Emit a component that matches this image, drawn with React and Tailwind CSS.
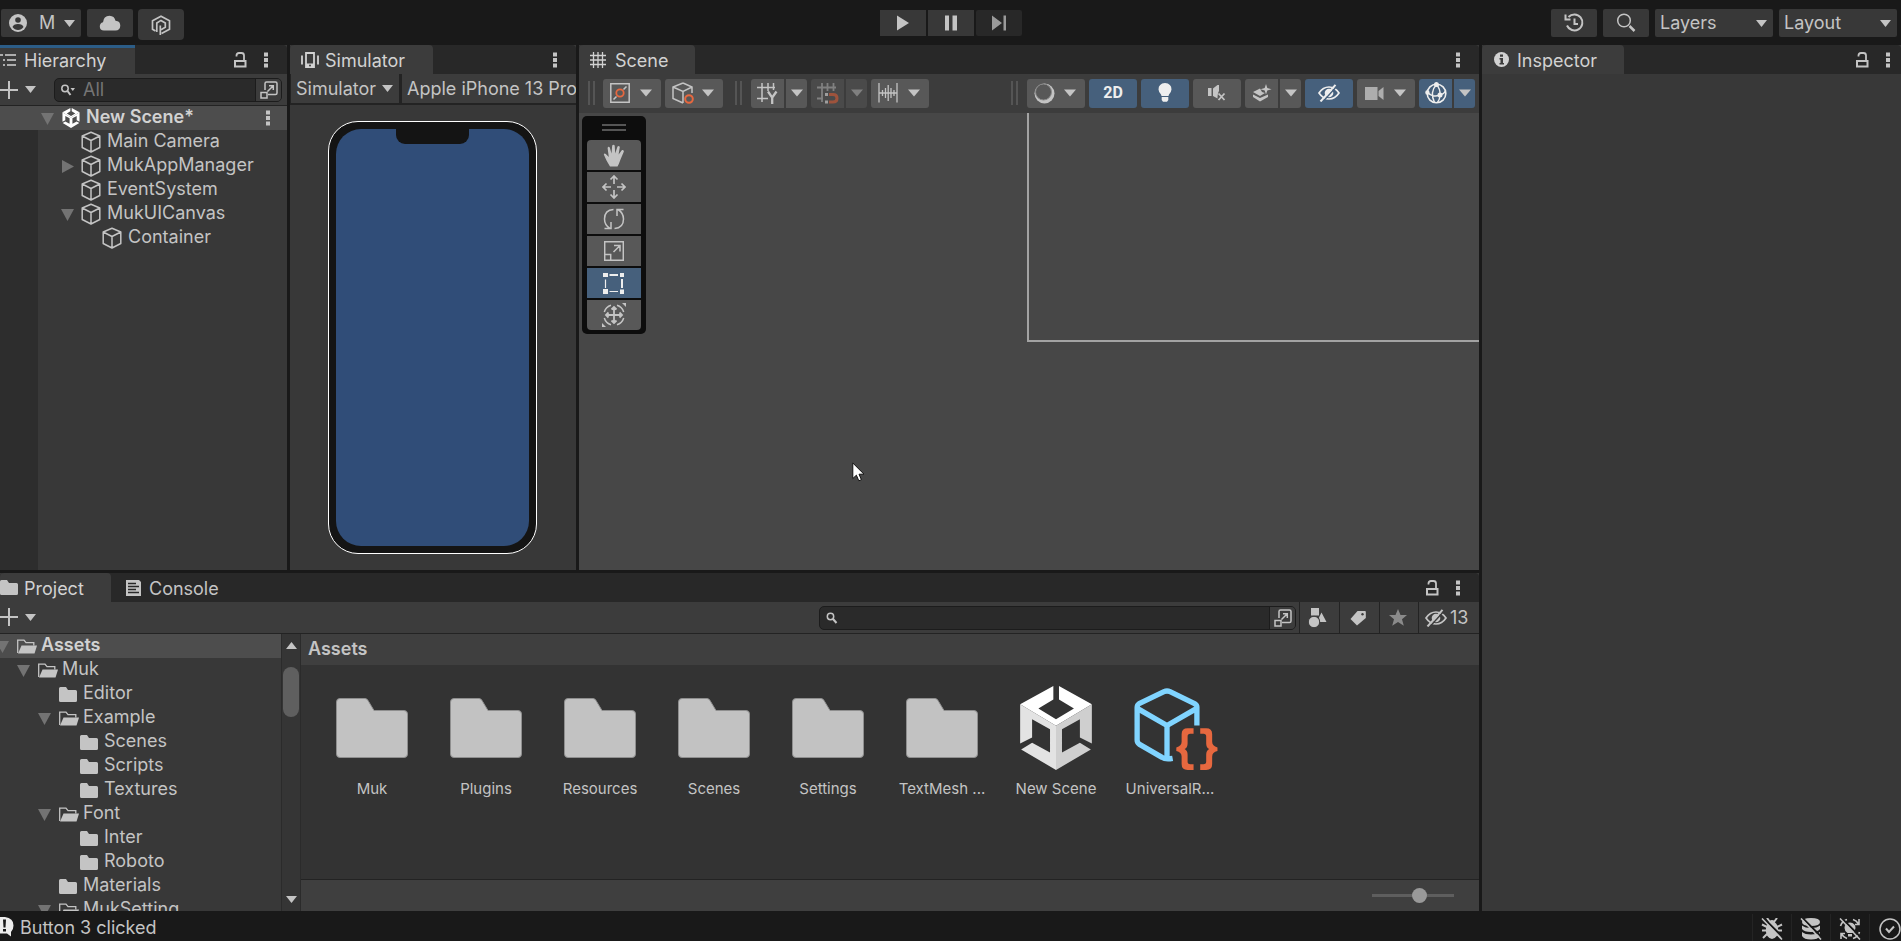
import React from "react";

const assets = [
  { name: "Muk", icon: "folder" },
  { name: "Plugins", icon: "folder" },
  { name: "Resources", icon: "folder" },
  { name: "Scenes", icon: "folder" },
  { name: "Settings", icon: "folder" },
  { name: "TextMesh ...", icon: "folder" },
  { name: "New Scene", icon: "scene" },
  { name: "UniversalR...", icon: "pipeline" },
];

const hierarchy = [
  { name: "Main Camera", depth: 1 },
  { name: "MukAppManager", depth: 1, arrow: "right" },
  { name: "EventSystem", depth: 1 },
  { name: "MukUICanvas", depth: 1, arrow: "down" },
  { name: "Container", depth: 2 },
];

const folders = [
  { name: "Assets", depth: 0, open: true },
  { name: "Muk", depth: 1, open: true },
  { name: "Editor", depth: 2 },
  { name: "Example", depth: 2, open: true },
  { name: "Scenes", depth: 3 },
  { name: "Scripts", depth: 3 },
  { name: "Textures", depth: 3 },
  { name: "Font", depth: 2, open: true },
  { name: "Inter", depth: 3 },
  { name: "Roboto", depth: 3 },
  { name: "Materials", depth: 2 },
  { name: "MukSetting", depth: 2, open: true },
];

const folderIndent = ["pl-0", "pl-[21px]", "pl-[42px]", "pl-[63px]"];
const objectIndent = ["pl-[41px]", "pl-[61px]", "pl-[82px]"];

/* ---------- icons ---------- */

function Icon({ w = 20, h = 20, box, className = "", children }) {
  return (
    <svg
      width={w}
      height={h}
      viewBox={box || `0 0 ${w} ${h}`}
      className={`block shrink-0 ${className}`}
      fill="none"
      stroke="currentColor"
      strokeWidth="1.5"
      aria-hidden="true"
    >
      {children}
    </svg>
  );
}

const Caret = ({ className = "" }) => (
  <Icon w={12} h={8} className={className}>
    <path d="M0 .5h12L6 7.5z" fill="currentColor" stroke="none" />
  </Icon>
);

const SmallCaret = ({ className = "" }) => (
  <Icon w={11} h={7} className={className}>
    <path d="M0 0h11L5.500 7z" fill="currentColor" stroke="none" />
  </Icon>
);

function Arrow({ dir }) {
  return (
    <Icon w={13} h={13} className="text-[#737373]">
      {dir === "down" && <path d="M0 1h13L6.500 13z" fill="currentColor" stroke="none" />}
      {dir === "right" && <path d="M1 0v13l12-6.500z" fill="currentColor" stroke="none" />}
    </Icon>
  );
}

const Dots = () => (
  <Icon w={6} h={16}>
    <path d="M1 .5h4v4H1zM1 6h4v4H1zM1 11.500h4v4H1z" fill="currentColor" stroke="none" />
  </Icon>
);

const Lock = () => (
  <Icon w={14} h={16}>
    <path d="M2 9h10.500v5.500H2z" strokeWidth="2" />
    <path d="M3.500 4.500V3.500Q3.500 1 6 1h2.500Q11 1 11 3.500V8" strokeWidth="1.800" />
  </Icon>
);

const Plus = () => (
  <Icon w={18} h={18}>
    <path d="M9 0v18M0 9h18" strokeWidth="2" />
  </Icon>
);

const Cube = () => (
  <Icon w={20} h={22}>
    <path d="M10 1.200 18.800 5v11.500L10 21l-8.800-4.500V5zM1.200 5 10 9.500 18.800 5M10 9.500V21" strokeWidth="1.500" strokeLinejoin="round" />
  </Icon>
);

function UnityMark({ w, h, shaded = true }) {
  return (
    <Icon w={w} h={h} box="180 77 216 253">
      <g stroke="none">
        <path fill="#fff" d="M280 77v41l-45 27 53 32 54-32-45-27V77l99 55-108 65-108-65z" />
        <path fill={shaded ? "#e3e3e3" : "#fff"} d="M180 132l108 65v133l-105-62 33-20 54 29v-70l-54-30v55l-36 18z" />
        <path fill={shaded ? "#cfcfcf" : "#fff"} d="M396 132l-108 65v133l105-62-33-20-54 29v-70l54-30v55l36 18z" />
      </g>
    </Icon>
  );
}

const PipelineIcon = () => (
  <Icon w={96} h={84} box="486 77 288 253">
    <path
      d="M711 196V140Q711 134 704 130L630 94Q621 90 612 94L537 130Q531 134 531 142V240Q531 248 537 252L606 292Q616 299 638 295M534 146l87 50 87-50M621 196v97"
      stroke="#80d4ff"
      strokeWidth="16"
      strokeLinejoin="round"
    />
    <g fill="#e7683f" stroke="none">
      <path d="M701 204h-18q-18 0-18 18v23q0 13-16 17v11q16 3 16 17v22q0 18 18 18h18v-17h-10q-8 0-8-8v-21q0-12-9-17 9-5 9-17v-21q0-8 8-8h10z" />
      <path d="M721 204h18q18 0 18 18v23q0 13 16 17v11q-16 3-16 17v22q0 18-18 18h-18v-17h10q8 0 8-8v-21q0-12 9-17-9-5-9-17v-21q0-8-8-8h-10z" />
    </g>
  </Icon>
);

const BigFolder = () => (
  <Icon w={72} h={60}>
    <path
      d="M4 .5h25Q31 .5 32 2.500L38 12.500H68Q71.500 12.500 71.500 16V56Q71.500 59.500 68 59.500H4Q.5 59.500 .5 56V4Q.5 .5 4 .5z"
      fill="#c2c2c2"
      stroke="#8f8f8f"
      strokeWidth="1"
    />
  </Icon>
);

const FolderIcon = () => (
  <Icon w={18} h={15}>
    <path d="M0 1.500Q0 0 1.500 0H7l2 3h7.500Q18 3 18 4.500V13.500Q18 15 16.500 15h-15Q0 15 0 13.500z" fill="#c4c4c4" stroke="none" />
  </Icon>
);

const OpenFolderIcon = () => (
  <Icon w={20} h={15}>
    <path d="M.7 14V1.200H7l2 2.500h7.800V6.500" stroke="#c4c4c4" strokeWidth="1.300" />
    <path d="M4.500 6.500H20L17.500 14.500H1z" fill="#c4c4c4" stroke="none" />
  </Icon>
);

const Expand = () => (
  <Icon w={18} h={18}>
    <path d="M5 9V2.500Q5 1 6.500 1H15.500Q17 1 17 2.500V12Q17 13.500 15.500 13.500H8M1 11.500h6V17H1zM7.500 10.500 13 5M9 4.700h4.300V9" />
  </Icon>
);

const EyeOff = ({ cut = "#3c3c3c" }) => (
  <Icon w={22} h={18}>
    <path d="M1 9q4-6 10-6t10 6q-4 6-10 6T1 9z" strokeWidth="1.700" />
    <circle cx="11" cy="9" r="4.300" fill="currentColor" stroke="none" />
    <path d="M4.500 18 19.500 1.500" stroke={cut} strokeWidth="1.500" />
    <path d="M2.500 17.500 17.500 .8" strokeWidth="2" />
  </Icon>
);

/* ---------- shared parts ---------- */

function IconButton({ label, className = "", children }) {
  return (
    <button type="button" aria-label={label} className={`flex shrink-0 items-center justify-center ${className}`}>
      {children}
    </button>
  );
}

function Tab({ icon, label, active = true, focus = false, className = "" }) {
  const look = active ? "bg-[#3c3c3c] text-[#d2d2d2]" : "text-[#c4c4c4]";
  const top = focus ? "border-t-[3px] border-[#2c5d87] pb-[3px]" : "rounded-t-[4px]";
  return (
    <button type="button" role="tab" aria-selected={active} className={`flex h-full shrink-0 items-center ${look} ${top} ${className}`}>
      {icon}
      <span className="pt-[2px]">{label}</span>
    </button>
  );
}

function TabBar({ children, lock = true, className = "pr-2" }) {
  return (
    <div className={`flex h-[29px] shrink-0 items-center rounded-t-[4px] bg-[#282828] ${className}`}>
      <div role="tablist" className="flex h-full flex-1">{children}</div>
      {lock && <IconButton label="Lock panel" className="w-[26px]"><Lock /></IconButton>}
      <IconButton label="Panel menu" className="w-[26px]"><Dots /></IconButton>
    </div>
  );
}

function Picker({ label, value, className = "", pad = "pl-[5px]" }) {
  return (
    <div className={`grid shrink-0 items-center ${className}`}>
      <select aria-label={label} className={`col-start-1 row-start-1 h-full w-full appearance-none bg-transparent ${pad}`}>
        <option>{value}</option>
      </select>
      <SmallCaret className="pointer-events-none col-start-1 row-start-1 mr-[6px] justify-self-end" />
    </div>
  );
}

const Grip = ({ className = "" }) => (
  <div className={`h-6 w-[7px] border-x-2 border-[#555555] ${className}`} />
);

function Tool({ label, on, dim, caret, narrow, children }) {
  const bg = on ? "bg-[#46607c] text-[#eeeeee]" : "bg-[#585858] text-[#c4c4c4]";
  const width = caret ? "w-[58px] pl-[7px] pr-[9px]" : narrow ? "w-[33px] rounded-r-none" : "w-[48px]";
  return (
    <IconButton label={label} className={`h-[29px] rounded-[3px] ${bg} ${width} ${dim ? "opacity-50" : ""}`}>
      {children}
      {caret && <Caret className="ml-auto" />}
    </IconButton>
  );
}

function SplitTool({ label, on, dim, children }) {
  return (
    <div className="flex gap-[2px]">
      <Tool label={label} on={on} dim={dim} narrow>{children}</Tool>
      <IconButton
        label={`${label} options`}
        className={`h-[29px] w-[21px] rounded-r-[3px] text-[#c4c4c4] ${on ? "bg-[#46607c]" : "bg-[#585858]"} ${dim ? "opacity-50" : ""}`}
      >
        <Caret />
      </IconButton>
    </div>
  );
}

/* ---------- top bar ---------- */

function TopBar() {
  const button = "h-7 w-[46px] rounded-[2px] bg-[#383838]";
  return (
    <header className="grid h-[45px] shrink-0 grid-cols-[1fr_auto_1fr] items-start pt-[9px] pl-px pr-1">
      <div className="flex items-start">
        <button type="button" aria-label="Account: M" className="flex h-7 w-20 items-center rounded-[2px] bg-[#383838] pl-2">
          <Icon w={18} h={18}>
            <circle cx="9" cy="9" r="9" fill="currentColor" stroke="none" />
            <circle cx="9" cy="6" r="2.800" fill="#383838" stroke="none" />
            <path d="M3.500 13q1-3 5.500-3t5.500 3Q12.500 16 9 16t-5.500-3z" fill="#383838" stroke="none" />
          </Icon>
          <span className="ml-3 mr-auto">M</span>
          <SmallCaret className="mr-[6px]" />
        </button>
        <IconButton label="Cloud" className={`ml-[6px] ${button}`}>
          <Icon w={22} h={16}>
            <path d="M5 15.500Q.8 15.500 .8 11.500 .8 8 4 7.300 4.500 1 10.500 .8 15.500 1 16.500 5.800 21.300 6 21.300 10.800 21 15.500 16.500 15.500z" fill="currentColor" stroke="none" />
          </Icon>
        </IconButton>
        <IconButton label="Version control" className="ml-[5px] h-[31px] w-[46px] rounded-[4px] bg-[#383838]">
          <Icon w={20} h={20}>
            <path d="M4.500 16 1.500 14.200V5.800L10 1.200l8.500 4.600v8.400L10.500 18.500" strokeWidth="1.700" />
            <path d="M5.800 17V8L10 5.400 14.300 8v4.300L10 14.700" strokeWidth="1.700" />
            <path d="M9.300 20v-9.500" strokeWidth="1.700" />
          </Icon>
        </IconButton>
      </div>

      <div className="flex gap-[2px] pt-px pl-[3px]">
        <IconButton label="Play" className="h-[26px] w-[46px] bg-[#383838]">
          <Icon w={12} h={16}><path d="M0 .5 12 8 0 15.500z" fill="currentColor" stroke="none" /></Icon>
        </IconButton>
        <IconButton label="Pause" className="h-[26px] w-[46px] bg-[#383838]">
          <Icon w={12} h={16}><path d="M0 .5h4v15H0zM7.500 .5h4.500v15H7.500z" fill="currentColor" stroke="none" /></Icon>
        </IconButton>
        <IconButton label="Step" className="h-[26px] w-[46px] rounded-[2px] bg-[#282828] text-[#9a9a9a]">
          <Icon w={16} h={16}><path d="M1 .5 11 8 1 15.500zM12.500 .5H15v15h-2.500z" fill="currentColor" stroke="none" /></Icon>
        </IconButton>
      </div>

      <div className="flex justify-end gap-[6px]">
        <IconButton label="Undo history" className={button}>
          <Icon w={20} h={20}>
            <path d="M4.500 4A8 8 0 1 1 3 12.500M1.500 1.500V6.500h5M10.500 5.500V11H14" strokeWidth="2" />
          </Icon>
        </IconButton>
        <IconButton label="Search" className={button}>
          <Icon w={20} h={20}>
            <circle cx="8" cy="7.500" r="6.300" strokeWidth="1.500" />
            <path d="M13.500 13 18.500 18" strokeWidth="2.500" />
          </Icon>
        </IconButton>
        <Picker label="Layers" value="Layers" className="h-7 w-[118px] rounded-[2px] bg-[#383838]" />
        <Picker label="Layout" value="Layout" className="h-7 w-[118px] rounded-[2px] bg-[#383838]" />
      </div>
    </header>
  );
}

/* ---------- hierarchy ---------- */

function Hierarchy() {
  return (
    <section aria-label="Hierarchy" className="flex w-[287px] shrink-0 flex-col bg-[#383838]">
      <TabBar>
        <Tab
          focus
          label="Hierarchy"
          className="w-[135px] gap-2"
          icon={
            <Icon w={16} h={14}>
              <path d="M0 2h3M5 2h11M3 7h2M7 7h9M3 12h2M7 12h9" strokeWidth="1.500" />
            </Icon>
          }
        />
      </TabBar>
      <div className="flex h-8 shrink-0 items-center border-b border-[#232323] bg-[#3c3c3c] pr-[5px]">
        <button type="button" aria-label="Create" className="flex items-center gap-[7px]">
          <Plus />
          <SmallCaret />
        </button>
        <div className="ml-[18px] flex h-6 flex-1 items-center overflow-hidden rounded-[5px] border border-[#1c1c1c] bg-[#2a2a2a]">
          <Icon w={14} h={12} className="ml-[6px]">
            <circle cx="4" cy="4.500" r="3.200" />
            <path d="M6.500 7 9.500 11" strokeWidth="2" />
            <path d="M9.500 4h4.500l-2.200 3z" fill="currentColor" stroke="none" />
          </Icon>
          <input type="text" aria-label="Search hierarchy" placeholder="All" className="ml-2 w-0 flex-1 bg-transparent outline-none placeholder:text-[#757575]" />
          <IconButton label="Open search window" className="h-full w-[26px] border-l border-[#1c1c1c] bg-[#3c3c3c]"><Expand /></IconButton>
        </div>
      </div>
      <div className="flex h-6 shrink-0 items-center bg-[#4d4d4d] pr-4 pl-[41px]">
        <Arrow dir="down" />
        <span className="ml-2"><UnityMark w={18} h={20} shaded={false} /></span>
        <span className="mr-auto ml-[6px] pb-[2px] font-semibold text-[#d2d2d2]">New Scene*</span>
        <IconButton label="Scene menu"><Dots /></IconButton>
      </div>
      <div className="flex flex-1">
        <div className="w-[38px] bg-[#2d2d2d]" />
        <ul className="-ml-[38px] flex-1">
          {hierarchy.map((o) => (
            <li key={o.name}>
              <button type="button" className={`flex h-6 w-full items-center ${objectIndent[o.depth]}`}>
                <Arrow dir={o.arrow} />
                <span className="ml-[7px]"><Cube /></span>
                <span className="ml-[6px] pb-[2px]">{o.name}</span>
              </button>
            </li>
          ))}
        </ul>
      </div>
    </section>
  );
}

/* ---------- simulator ---------- */

function Simulator() {
  return (
    <section aria-label="Simulator" className="flex w-[286px] shrink-0 flex-col overflow-hidden bg-[#383838]">
      <TabBar lock={false}>
        <Tab
          label="Simulator"
          className="w-[143px] gap-[6px] pl-[11px]"
          icon={
            <Icon w={18} h={16}>
              <path d="M5 1h8v14H5z" strokeWidth="1.800" />
              <path d="M5 11.500h8V15H5z" fill="currentColor" stroke="none" />
              <path d="M1 3.500v9M17 3.500v9" strokeWidth="1.800" />
              <circle cx="9" cy="13.500" r="1" fill="#3c3c3c" stroke="none" />
            </Icon>
          }
        />
      </TabBar>
      <div className="flex h-[31px] shrink-0 overflow-hidden border-b-2 border-[#232323] bg-[#3c3c3c]">
        <Picker label="View" value="Simulator" className="w-[112px] border-r-[3px] border-l border-[#232323]" />
        <Picker label="Device" value="Apple iPhone 13 Pro Max" className="w-[250px]" />
      </div>
      <div className="flex flex-1 justify-center pt-4 pr-[2px]">
        <div className="flex h-[433px] w-[209px] rounded-[30px] border border-white bg-[#141414] p-[7px]">
          <div className="flex flex-1 justify-center overflow-hidden rounded-[25px] bg-[#304d78]">
            <div className="h-[15px] w-[73px] rounded-b-[9px] bg-[#141414]" />
          </div>
        </div>
      </div>
    </section>
  );
}

/* ---------- scene ---------- */

const tools = [
  {
    name: "View tool",
    icon: (
      <Icon w={22} h={23}>
        <path
          d="M7 22.500 3.500 16.500 .8 10.500Q1.200 9 2.800 10L5.800 13 4.600 4Q5.200 2 6.800 3.500L8.500 9.500 9.200 1.500Q10.500 0 11.700 1.500L12.200 9.500 14.500 2.500Q16 1.300 16.800 3L15.600 10.500 19 6Q21 5.500 20.900 7.500L17.500 15.500 15.800 20 14.500 22.500z"
          fill="currentColor"
          stroke="none"
        />
      </Icon>
    ),
  },
  {
    name: "Move tool",
    icon: (
      <Icon w={24} h={24}>
        <path d="M12 9V2M8.500 4.500 12 1l3.500 3.500M12 15v7M8.500 19.500 12 23l3.500-3.500M9 12H2M4.500 8.500 1 12l3.500 3.500M15 12h7M19.500 8.500 23 12l-3.500 3.500" strokeWidth="1.700" />
      </Icon>
    ),
  },
  {
    name: "Rotate tool",
    icon: (
      <Icon w={22} h={22}>
        <path d="M10.500 1.500Q1.500 2 1.500 11q0 6 5.500 9.500M1.500 20.500H8V14M11.500 20.500q9-.5 9-9.500 0-6-5.500-9.500M20.500 1.500H14V8" />
      </Icon>
    ),
  },
  {
    name: "Scale tool",
    icon: (
      <Icon w={20} h={20}>
        <path d="M.7 .7h18.600v18.600H.7zM.7 13.500h6v6M9.500 11 15.500 5M10 4.500h6v6" />
      </Icon>
    ),
  },
  {
    name: "Rect tool",
    on: true,
    icon: (
      <Icon w={22} h={21}>
        <path d="M0 0h5v4H0zM17 0h4v4H17zM0 16h5v5H0zM17 16.500h4V21h-4z" fill="currentColor" stroke="none" />
        <path d="M6.500 2h8.500M19 6v9" strokeWidth="2" />
        <path d="M6.500 18.500h8.500M2.500 6.500V15" strokeWidth="1.200" />
      </Icon>
    ),
  },
  {
    name: "Transform tool",
    icon: (
      <Icon w={24} h={24}>
        <path d="M12 4v16M4 12h16M9.500 6.500 12 4 14.500 6.500M9.500 17.500 12 20 14.500 17.500M6.500 9.500 4 12 6.500 14.500M17.500 9.500 20 12 17.500 14.500" strokeWidth="1.800" />
        <path d="M9 2.300A10 10 0 0 0 2.300 9M15 2.300A10 10 0 0 1 21.700 9M9 21.700A10 10 0 0 1 2.300 15M15 21.700A10 10 0 0 0 21.700 15" />
        <path d="M20 0h4v4zM0 20v4h4z" fill="currentColor" stroke="none" />
      </Icon>
    ),
  },
];

function SceneToolbar() {
  return (
    <div className="flex h-[39px] shrink-0 items-center bg-[#3c3c3c] pr-1 pb-px pl-[9px]">
      <Grip className="mr-2" />
      <div className="flex gap-1">
        <Tool label="Tool handle position" caret>
          <Icon w={20} h={20}>
            <path d="M.8 .8h18.400v18.400H.8z" />
            <path d="M3.500 16.500l3-3M13.500 6.500l3-3" />
            <circle cx="10" cy="10" r="3.700" stroke="#e7683f" strokeWidth="1.800" />
          </Icon>
        </Tool>
        <Tool label="Tool handle rotation" caret>
          <Icon w={22} h={22}>
            <path d="M11 1 20 5v6M11 21 1 16.500V5l10-4M1 5l10 4.500L20 5M11 9.500V21" />
            <circle cx="17" cy="17" r="3.800" stroke="#e7683f" strokeWidth="2" />
          </Icon>
        </Tool>
      </div>
      <Grip className="mr-[9px] ml-3" />
      <div className="flex gap-1">
        <SplitTool label="Grid visibility">
          <Icon w={21} h={21}>
            <path d="M5 0v19M0 4.500h18M0 15.500h11M11 0v8M16.500 0v7" />
            <path d="M11 8.500 15.200 14.500V21M19.500 8.500 15.200 14.500" strokeWidth="2.300" />
          </Icon>
        </SplitTool>
        <SplitTool label="Grid snapping" dim>
          <Icon w={22} h={21}>
            <path d="M5 0v19M0 4.500h19M0 15.500h6M10.500 0v8M16.500 0v8" strokeWidth="1.800" />
            <path d="M12 11.500H16q4 0 4 3.800 0 3.700-4 3.700h-4" stroke="#ff6a3d" strokeWidth="3" />
            <path d="M8 10h3v3H8zM8 17.500h3v3H8z" fill="#ffffff" stroke="none" />
          </Icon>
        </SplitTool>
        <Tool label="Snap increment" caret>
          <Icon w={20} h={20}>
            <path d="M1 0v19.500M19 0v19.500M1 10h18M4.500 7v6M7.500 5v10M10.200 2v16M13 5v10M16 7v6" strokeWidth="1.300" />
          </Icon>
        </Tool>
      </div>

      <Grip className="mr-[9px] ml-auto" />
      <div className="flex gap-1">
        <Tool label="Draw mode" caret>
          <Icon w={21} h={21}>
            <circle cx="10.500" cy="10.500" r="10" fill="#c4c4c4" stroke="none" />
            <circle cx="9.500" cy="9" r="8" fill="#585858" strokeWidth="1" stroke="#8a8a8a" />
          </Icon>
        </Tool>
        <Tool label="2D view" on>
          <span className="font-[Roboto,sans-serif] text-base font-bold">2D</span>
        </Tool>
        <Tool label="Scene lighting" on>
          <Icon w={14} h={20}>
            <path d="M7 0Q13.500 .5 13.500 6.500 13.300 9 11 11.500L10.500 13h-7L3 11.500Q.7 9 .5 6.500 .5 .5 7 0zM3.700 14h6.600v3L9 18.800H5L3.700 17z" fill="currentColor" stroke="none" />
          </Icon>
        </Tool>
        <Tool label="Scene audio">
          <Icon w={18} h={18}>
            <path d="M0 4h3.500v8H0zM5 4.500 9.500 1H11v6Q9.500 9 9.500 14.500L5 12z" fill="currentColor" stroke="none" />
            <path d="M10.500 9.500 16.500 16M16.500 9.500 10.500 16" strokeWidth="1.800" />
          </Icon>
        </Tool>
        <SplitTool label="Effects">
          <Icon w={20} h={18}>
            <path d="M1 8 8 4.500l2 3.500 3 1-5 3zM1 10.500l7 3.500 8-3.500v2.500L8 17.500 1 13zM14 0l1.300 4L19.500 5.200 15.300 6.500 14 10.500 12.700 6.500 8.500 5.200 12.700 4z" fill="currentColor" stroke="none" />
          </Icon>
        </SplitTool>
        <Tool label="Hidden objects" on><EyeOff cut="#46607c" /></Tool>
        <Tool label="Camera settings" caret>
          <Icon w={20} h={13}>
            <path d="M1 0h12.500v13H1zM14.500 4 19.500 0v13l-5-4z" fill="#adadad" stroke="none" />
          </Icon>
        </Tool>
        <SplitTool label="Gizmos" on>
          <Icon w={22} h={22}>
            <circle cx="11.500" cy="11.500" r="9.300" strokeWidth="1.600" />
            <path d="M11.500 2.500Q4.500 10 9.500 20.500M2.500 10.500Q8.500 16 14.500 13M11.500 2.500Q15.500 7 15 13M15 13Q15 17 12.500 20.500M15 13q4-1 5.500-4" strokeWidth="1.400" />
            <path d="M14 2.500a2.500 2.500 0 1 1-5 0 2.500 2.500 0 0 1 5 0zM4.600 10.500a2.200 2.200 0 1 1-4.400 0 2.200 2.200 0 0 1 4.400 0zM17.500 13a2.500 2.500 0 1 1-5 0 2.500 2.500 0 0 1 5 0z" fill="currentColor" stroke="none" />
          </Icon>
        </SplitTool>
      </div>
    </div>
  );
}

function Scene() {
  return (
    <section aria-label="Scene" className="flex min-w-0 flex-1 flex-col bg-[#383838]">
      <TabBar lock={false}>
        <Tab
          label="Scene"
          className="w-[116px] gap-[9px] pl-[11px]"
          icon={
            <Icon w={16} h={16}>
              <path d="M3.500 0v16M8 0v16M12.500 0v16M0 3.500h16M0 8h16M0 12.500h16" strokeWidth="1.300" />
            </Icon>
          }
        />
      </TabBar>
      <SceneToolbar />
      <div className="relative flex-1 overflow-hidden bg-[#474747]">
        <div className="absolute top-0 right-0 left-[448px] h-[229px] border-b-2 border-l-2 border-[#a3a3a3]" />
        <div className="absolute top-[3px] left-[3px] flex w-16 flex-col rounded-[5px] bg-[#0d0d0d] px-[5px] pb-1">
          <div className="mx-auto mt-2 mb-[9px] h-[7px] w-6 border-y-2 border-[#555555]" />
          <div role="toolbar" aria-label="Tools" className="flex flex-col gap-[2px] overflow-hidden rounded-[4px]">
            {tools.map((t) => (
              <IconButton
                key={t.name}
                label={t.name}
                className={`h-[30px] ${t.on ? "bg-[#46607c] text-[#eeeeee]" : "bg-[#585858] text-[#c4c4c4]"}`}
              >
                {t.icon}
              </IconButton>
            ))}
          </div>
        </div>
        <svg width="13" height="20" viewBox="0 0 13 20" className="absolute top-[349px] left-[273px]" aria-hidden="true">
          <path d="M.8 1v15.500l3.600-3.300 2.400 5.600 2.600-1.100L7 12.200h5z" fill="#fff" stroke="#111" strokeWidth="1" />
        </svg>
      </div>
    </section>
  );
}

/* ---------- project ---------- */

function Project() {
  const filter = "h-full border-l border-[#232323]";
  return (
    <section aria-label="Project" className="flex h-[338px] shrink-0 flex-col bg-[#383838]">
      <TabBar>
        <Tab label="Project" className="w-[111px] gap-[6px]" icon={<FolderIcon />} />
        <Tab
          label="Console"
          active={false}
          className="gap-2 pl-[15px]"
          icon={
            <Icon w={15} h={16}>
              <path d="M0 0h13l2 2v14H0z" fill="currentColor" stroke="none" />
              <path d="M2 3.500h8M2 6.500h11M2 9.500h8M2 12.500h11" stroke="#282828" strokeWidth="1.300" />
            </Icon>
          }
        />
      </TabBar>
      <div className="flex h-8 shrink-0 items-center border-b border-[#232323] bg-[#3c3c3c]">
        <button type="button" aria-label="Create asset" className="mr-auto flex items-center gap-[7px] pb-px">
          <Plus />
          <SmallCaret />
        </button>
        <div className="mr-[3px] flex h-6 w-[477px] items-center overflow-hidden rounded-[5px] border border-[#1c1c1c] bg-[#2a2a2a]">
          <Icon w={12} h={12} className="ml-[6px]">
            <circle cx="4.500" cy="4.500" r="3.200" />
            <path d="M7 7 10.500 11" strokeWidth="2" />
          </Icon>
          <input type="text" aria-label="Search project" className="ml-2 w-0 flex-1 bg-transparent outline-none" />
          <IconButton label="Open search window" className="h-full w-[26px] border-l border-[#1c1c1c] bg-[#3c3c3c]"><Expand /></IconButton>
        </div>
        <IconButton label="Search by type" className={`w-10 pr-1 ${filter}`}>
          <Icon w={19} h={20}>
            <path d="M3 0h8v7.500H3zM13.500 4.500l5 9.500h-6.500l-1-4.500z" fill="currentColor" stroke="none" />
            <circle cx="6" cy="14" r="5.700" fill="currentColor" stroke="#3c3c3c" strokeWidth="1" />
          </Icon>
        </IconButton>
        <IconButton label="Search by label" className={`w-10 pr-1 ${filter}`}>
          <Icon w={16} h={16}>
            <path d="M7.500 1H15q.8 0 .8 1v6L7 15.500 .5 9z" fill="currentColor" stroke="none" />
            <circle cx="12.500" cy="4.200" r="1.200" fill="#3c3c3c" stroke="none" />
          </Icon>
        </IconButton>
        <IconButton label="Favorites" className={`w-[39px] pr-[2px] text-[#8a8a8a] ${filter}`}>
          <Icon w={18} h={17}>
            <path d="M9 0l2.500 6H18l-5 4.200 1.800 6.500L9 13l-5.800 3.700L5 10.200 0 6h6.500z" fill="currentColor" stroke="none" />
          </Icon>
        </IconButton>
        <button type="button" aria-label="Hidden packages: 13" className={`flex w-[61px] items-center gap-[3px] pl-[6px] ${filter}`}>
          <EyeOff />
          <span>13</span>
        </button>
      </div>

      <div className="flex min-h-0 flex-1">
        <ul className="w-[281px] shrink-0 overflow-hidden">
          {folders.map((f, i) => (
            <li key={i} className={i === 0 ? "bg-[#4d4d4d] font-semibold text-[#d2d2d2]" : ""}>
              <button type="button" className={`-ml-1 flex h-6 items-center ${folderIndent[f.depth]}`}>
                <Arrow dir={f.open ? "down" : undefined} />
                <span className="ml-2 w-5">{f.open ? <OpenFolderIcon /> : <FolderIcon />}</span>
                <span className="ml-1 pb-[2px]">{f.name}</span>
              </button>
            </li>
          ))}
        </ul>
        <div className="flex w-5 shrink-0 flex-col items-center border-x border-[#2b2b2b] bg-[#353535] py-2">
          <SmallCaret className="rotate-180" />
          <div className="mt-[18px] mb-auto h-[50px] w-4 rounded-full bg-[#5f5f5f]" />
          <SmallCaret />
        </div>
        <div className="flex min-w-0 flex-1 flex-col bg-[#333333]">
          <h2 className="flex h-[31px] shrink-0 items-center bg-[#3f3f3f] pb-[2px] pl-[7px] font-semibold">Assets</h2>
          <div className="flex flex-1 flex-wrap content-start pt-[21px] pl-[14px]">
            {assets.map((a) => (
              <button type="button" key={a.name} className="flex w-[114px] flex-col items-center gap-2">
                <span className="flex h-[84px] items-center">
                  {a.icon === "folder" && <BigFolder />}
                  {a.icon === "scene" && <UnityMark w={72} h={84} />}
                  {a.icon === "pipeline" && <PipelineIcon />}
                </span>
                <span className="text-[15px] leading-[22px]">{a.name}</span>
              </button>
            ))}
          </div>
          <div className="flex h-8 shrink-0 items-center justify-end border-t border-[#232323] bg-[#3f3f3f] pr-[25px]">
            <input
              type="range"
              aria-label="Icon size"
              min="0"
              max="100"
              defaultValue="59"
              className="h-4 w-[82px] appearance-none bg-transparent [&::-webkit-slider-runnable-track]:h-[3px] [&::-webkit-slider-runnable-track]:bg-[#5e5e5e] [&::-webkit-slider-thumb]:-mt-[6px] [&::-webkit-slider-thumb]:size-[15px] [&::-webkit-slider-thumb]:appearance-none [&::-webkit-slider-thumb]:rounded-full [&::-webkit-slider-thumb]:bg-[#999999]"
            />
          </div>
        </div>
      </div>
    </section>
  );
}

/* ---------- inspector and status ---------- */

function Inspector() {
  return (
    <section aria-label="Inspector" className="flex w-[419px] shrink-0 flex-col bg-[#383838]">
      <TabBar className="">
        <Tab
          label="Inspector"
          className="w-[142px] gap-2 pl-3"
          icon={
            <Icon w={15} h={15}>
              <circle cx="7.500" cy="7.500" r="7.500" fill="currentColor" stroke="none" />
              <path d="M6 2.500h3v2.200H6zM5.500 6h3.500v5h1v1.500H5.500V11h1V7.500h-1z" fill="#3c3c3c" stroke="none" />
            </Icon>
          }
        />
      </TabBar>
    </section>
  );
}

function StatusBar() {
  const cell = "h-[27px] w-[39px] border-l border-[#242424] pt-[3px]";
  const slash = (
    <>
      <path d="M2.500 0 22.500 20" stroke="#191919" strokeWidth="2" />
      <path d="M1 .5 21 21.500" strokeWidth="1.600" />
    </>
  );
  return (
    <footer className="flex h-[30px] shrink-0 items-end overflow-hidden">
      <button type="button" className="mr-auto flex h-full items-center gap-[6px]">
        <Icon w={14} h={21}>
          <path d="M0 1h5q8.500 1 8.500 8.500 0 4-2.500 6.500v4.500l-4-3H0z" fill="#eeeeee" stroke="none" />
          <path d="M3 3.500h3l-.5 8h-2zM3 13h3v2.500H3z" fill="#191919" stroke="none" />
        </Icon>
        <span className="pt-1">Button 3 clicked</span>
      </button>
      <IconButton label="Debugger" className={cell}>
        <Icon w={22} h={22}>
          <path d="M8 4.500Q8 2 11 2t3 2.500q3 2 3.200 7.500 0 8-6.200 9-6-1-6.200-9Q5 6.500 8 4.500z" fill="currentColor" stroke="none" />
          <path d="M6 0l3 4M16 0l-3 4M1 6.500l5 2.500M21 6.500 16 9M1 12.500h20M2 20l4-4M20 20l-4-4" strokeWidth="2" />
          {slash}
        </Icon>
      </IconButton>
      <IconButton label="Cache server" className={cell}>
        <Icon w={22} h={22}>
          <path d="M2 4q0-4 9-4t9 4-9 4-9-4zM2 7.500q3 2.500 9 2.500t9-2.500V11q-2 3-9 3t-9-3zM2 14q3 2.500 9 2.500t9-2.500v4q-2 3.500-9 3.500T2 18z" fill="currentColor" stroke="none" />
          {slash}
        </Icon>
      </IconButton>
      <IconButton label="Auto lighting" className={cell}>
        <Icon w={22} h={22}>
          <path d="M11 4.500q5.500 .5 5.500 5.500 0 3-3 5h-5q-3-2-3-5 0-5 5.500-5.500zM9 16h4v2.500H9z" fill="currentColor" stroke="none" />
          <path d="M8 1.500A10 10 0 0 0 1.500 8M14 1.500a10 10 0 0 1 5.500 4.500M8 20.500A10 10 0 0 1 2.500 16M14 20.500A10 10 0 0 0 20.500 14M20 1v5.500h-4M2 21v-5.500h4" strokeWidth="1.600" />
          {slash}
        </Icon>
      </IconButton>
      <IconButton label="Background tasks" className="h-[27px] w-8 border-l border-[#242424] pt-[3px] pl-2">
        <Icon w={22} h={22}>
          <circle cx="11" cy="11" r="10" strokeWidth="1.500" />
          <path d="M7 10.500 10 14l5-5.500" strokeWidth="2" />
        </Icon>
      </IconButton>
    </footer>
  );
}

export default function App() {
  return (
    <div className="flex h-screen flex-col overflow-hidden bg-[#191919] font-[Inter,sans-serif] text-[18px] leading-6 whitespace-nowrap text-[#c4c4c4] [font-optical-sizing:none]">
      <TopBar />
      <main className="flex min-h-0 flex-1 gap-[3px]">
        <div className="flex min-w-0 flex-1 flex-col gap-[3px]">
          <div className="flex min-h-0 flex-1 gap-[3px]">
            <Hierarchy />
            <Simulator />
            <Scene />
          </div>
          <Project />
        </div>
        <Inspector />
      </main>
      <StatusBar />
    </div>
  );
}
